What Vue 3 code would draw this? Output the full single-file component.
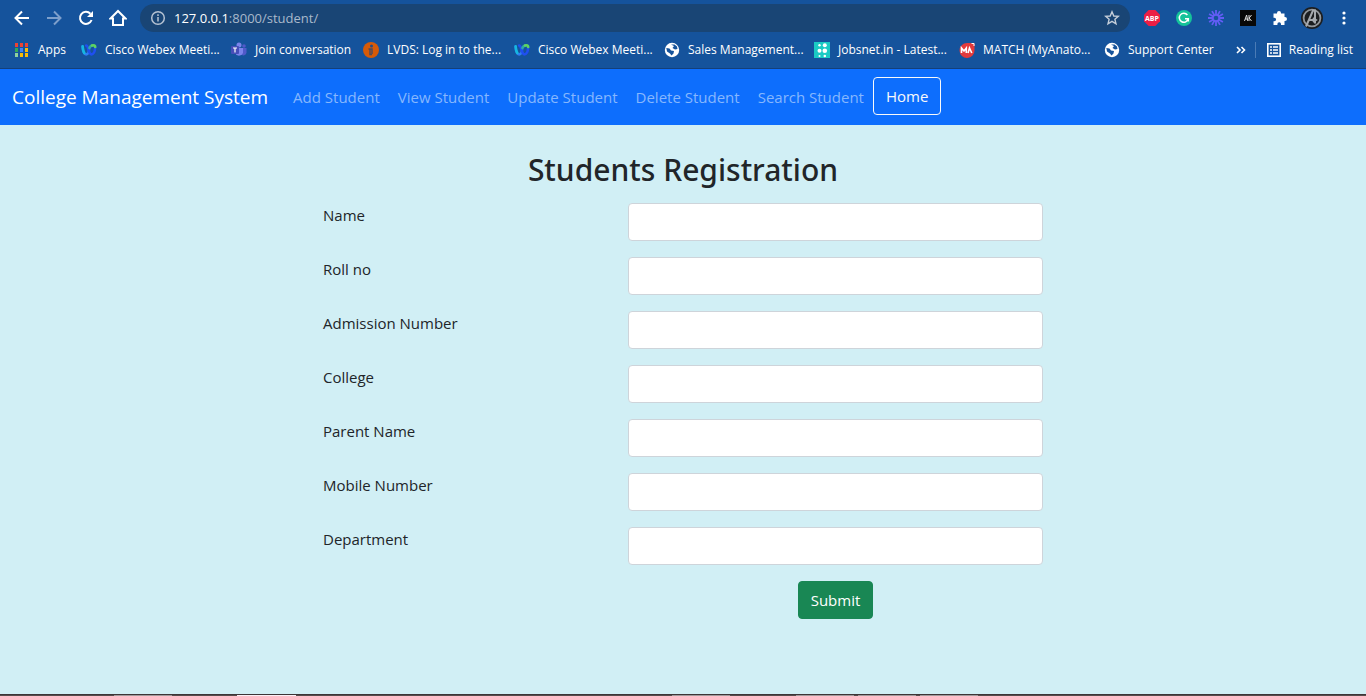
<script setup>
const bookmarks = [
  { icon: 'apps', label: 'Apps' },
  { icon: 'webex', label: 'Cisco Webex Meeti...' },
  { icon: 'teams', label: 'Join conversation' },
  { icon: 'lvds', label: 'LVDS: Log in to the...' },
  { icon: 'webex', label: 'Cisco Webex Meeti...' },
  { icon: 'globe', label: 'Sales Management...' },
  { icon: 'jobs', label: 'Jobsnet.in - Latest...' },
  { icon: 'match', label: 'MATCH (MyAnato...' },
  { icon: 'globe', label: 'Support Center' },
]
const appDots = ['#ea4335', '#ea4335', '#ea4335', '#34a853', '#4285f4', '#fbbc05', '#8fd19e', '#fbbc05', '#fbbc05']
const links = ['Add Student', 'View Student', 'Update Student', 'Delete Student', 'Search Student']
const fields = [
  { id: 'name', label: 'Name' },
  { id: 'roll', label: 'Roll no' },
  { id: 'admission', label: 'Admission Number' },
  { id: 'college', label: 'College' },
  { id: 'parent', label: 'Parent Name' },
  { id: 'mobile', label: 'Mobile Number' },
  { id: 'department', label: 'Department' },
]
</script>

<template>
  <div class="window">
    <header class="chrome">
      <div class="toolbar">
        <button class="tool" aria-label="Back">
          <svg width="16" height="16" viewBox="0 0 16 16" fill="none" stroke="#fff" stroke-width="2"><path d="M15 8H2M8 1.5L1.5 8L8 14.5" /></svg>
        </button>
        <button class="tool" aria-label="Forward">
          <svg width="16" height="16" viewBox="0 0 16 16" fill="none" stroke="#7d9fcb" stroke-width="2"><path d="M1 8H14M8 1.5L14.5 8L8 14.5" /></svg>
        </button>
        <button class="tool" aria-label="Reload">
          <svg width="16" height="16" viewBox="0 0 16 16" fill="none" stroke="#fff" stroke-width="2"><path d="M13.6 10A6 6 0 1 1 12.4 3.8" /><path d="M15 1V7H9Z" fill="#fff" stroke="none" /></svg>
        </button>
        <button class="tool" aria-label="Home page">
          <svg width="18" height="18" viewBox="0 0 18 18" fill="none" stroke="#fff" stroke-width="2"><path d="M1.5 9.5L9 2L16.5 9.5H14V16H4V9.5Z" /></svg>
        </button>
        <div class="address">
          <svg width="16" height="16" viewBox="0 0 16 16" fill="none" stroke="#b5c2d2" stroke-width="1.5"><circle cx="8" cy="8" r="6.3" /><path d="M8 7V11.5M8 4.3V6" /></svg>
          <span class="url"><b>127.0.0.1</b>:8000/student/</span>
          <button class="star" aria-label="Bookmark this page">
            <svg width="16" height="16" viewBox="0 0 16 16" fill="none" stroke="#c5ced9" stroke-width="1.4"><path d="M8 1.8L9.8 6L14.3 6.4L10.9 9.3L12 13.8L8 11.4L4 13.8L5.1 9.3L1.7 6.4L6.2 6Z" /></svg>
          </button>
        </div>
        <div class="extensions">
          <button class="tool" aria-label="Ad blocker">
            <svg width="16" height="16" viewBox="0 0 16 16"><path d="M4.7 0H11.3L16 4.7V11.3L11.3 16H4.7L0 11.3V4.7Z" fill="#ed1e45" /><text x="8" y="10.6" class="abp" text-anchor="middle">ABP</text></svg>
          </button>
          <button class="tool" aria-label="Grammar">
            <svg width="16" height="16" viewBox="0 0 16 16"><circle cx="8" cy="8" r="8" fill="#15c39a" /><path d="M11.4 5A4.5 4.5 0 1 0 12.2 8.8H9M12.3 8.4V11.5" fill="none" stroke="#fff" stroke-width="1.5" /></svg>
          </button>
          <button class="tool" aria-label="Recorder">
            <svg width="16" height="16" viewBox="0 0 16 16" fill="none" stroke="#625df5" stroke-width="1.8"><path d="M8 0V5M8 11V16M0 8H5M11 8H16M4 1.1L6.5 5.4M9.5 10.6L12 14.9M1.1 4L5.4 6.5M10.6 9.5L14.9 12M1.1 12L5.4 9.5M10.6 6.5L14.9 4M4 14.9L6.5 10.6M9.5 5.4L12 1.1" /><circle cx="8" cy="8" r="3.2" /></svg>
          </button>
          <button class="tool" aria-label="AK">
            <svg width="16" height="16" viewBox="0 0 16 16"><rect width="16" height="16" fill="#080808" /><path d="M4.5 11L6.6 5L7.8 11M5.2 9H7.5M9 5V11M11.5 5L9.2 8L11.5 11" fill="none" stroke="#ddd" stroke-width="1" /></svg>
          </button>
          <button class="tool" aria-label="Extensions">
            <svg width="16" height="16" viewBox="0 0 16 16" fill="#fff"><path d="M1.5 3.5H5V3A2 2 0 0 1 9 3V3.5H12.5V7H13A2 2 0 0 1 13 11H12.5V15H9V14A1.8 1.8 0 0 0 5.4 14V15H1.5V11.3H2.3A1.8 1.8 0 0 0 2.3 7.7H1.5Z" /></svg>
          </button>
          <button class="tool" aria-label="Profile">
            <svg width="22" height="22" viewBox="0 0 22 22"><circle cx="11" cy="11" r="11" fill="#1c1e20" /><circle cx="11" cy="11" r="8.4" fill="none" stroke="#92969a" stroke-width="1.8" /><path d="M5 19.5L12 3.5H14V16.5M8.5 13H15M12 11L15 13L12 15" fill="none" stroke="#a5a9ad" stroke-width="2" /></svg>
          </button>
          <button class="tool" aria-label="Menu">
            <svg width="16" height="16" viewBox="0 0 16 16" fill="#fff"><circle cx="8" cy="3" r="1.6" /><circle cx="8" cy="8" r="1.6" /><circle cx="8" cy="13" r="1.6" /></svg>
          </button>
        </div>
      </div>

      <div class="bookmarks">
        <nav class="bookmark-list" aria-label="Bookmarks">
          <a v-for="(b, i) in bookmarks" :key="i" href="#" class="bookmark">
            <svg v-if="b.icon === 'apps'" width="16" height="16" viewBox="0 0 16 16"><rect v-for="(c, n) in appDots" :key="n" :x="1 + (n % 3) * 5" :y="1 + Math.floor(n / 3) * 5" width="3" height="4" :fill="c" /></svg>
            <svg v-else-if="b.icon === 'webex'" width="16" height="16" viewBox="0 0 16 16" fill="none" stroke-linecap="round" stroke-width="2.6"><path d="M1.6 4.5C1.8 8.5 3 12.4 5.2 12.4C7.2 12.4 8 9.5 8 7.5" stroke="#2f7df2" /><path d="M1.6 4.3C1.8 7 2.4 9.5 3.3 11" stroke="#14b8e0" /><path d="M5.2 3.6C7.6 3.6 7.4 12.4 10.4 12.4C12.8 12.4 14 8.5 14.2 5" stroke="#1f4ff0" /><path d="M8.4 6C9 4.4 10 3.6 11.5 3.5" stroke="#2fa8a8" /><path d="M11 3.5C12.8 2.8 14.2 3.6 14.2 5" stroke="#5fd35f" /></svg>
            <svg v-else-if="b.icon === 'teams'" width="16" height="16" viewBox="0 0 16 16"><circle cx="8" cy="3" r="2.5" fill="#7b83eb" /><circle cx="13" cy="4" r="1.8" fill="#5059c9" /><path d="M10 6H15.5V10.5A3 3 0 0 1 10 12Z" fill="#5059c9" /><path d="M4 6H12V11A4.3 4.3 0 0 1 4 11Z" fill="#7b83eb" /><rect x="0" y="4" width="8" height="8" rx="1" fill="#464eb8" /><path d="M2 6H6M4 6V10.5" stroke="#fff" stroke-width="1.2" /></svg>
            <svg v-else-if="b.icon === 'lvds'" width="16" height="16" viewBox="0 0 16 16"><circle cx="8" cy="8" r="8" fill="#d65a08" /><circle cx="8.5" cy="4" r="1.5" fill="#234b83" /><path d="M5.5 7H9V12M7 7V12.5H9" fill="none" stroke="#504b5a" stroke-width="1.5" /></svg>
            <svg v-else-if="b.icon === 'globe'" width="16" height="16" viewBox="0 0 16 16"><circle cx="8" cy="8" r="7.2" fill="#fff" /><path d="M2.3 6L5.5 6.5L7 8.5L10 9L9.5 11.5L7.5 13.5L6 11.5L3 9.5ZM7 2.5L10 4L8.5 6L11 7.5L13.5 7L13 4.5L10.5 2.5Z" fill="#15539c" /></svg>
            <svg v-else-if="b.icon === 'jobs'" width="16" height="16" viewBox="0 0 16 16" fill="#fff"><rect width="16" height="16" fill="#1bcac4" /><circle cx="5.5" cy="3.3" r="1.2" /><circle cx="10.8" cy="3.3" r="2" /><circle cx="5.5" cy="8.7" r="2" /><circle cx="10.8" cy="8.7" r="2.3" /><circle cx="5.5" cy="14" r="1" /><circle cx="10.8" cy="14" r="1.3" /></svg>
            <svg v-else width="16" height="16" viewBox="0 0 16 16"><path d="M8 1H15.5V8A7.5 7.5 0 1 1 8 1Z" fill="#e23a3c" /><path d="M2.5 11V6L5 9L7.3 6V11M9 11L10.5 6L12.8 11" fill="none" stroke="#fff" stroke-width="1.6" /><path d="M12.5 1.5H15V4" fill="none" stroke="#fff" /></svg>
            <span>{{ b.label }}</span>
          </a>
        </nav>
        <button class="more" aria-label="More bookmarks">
          <svg width="10" height="8" viewBox="0 0 10 8" fill="none" stroke="#fff" stroke-width="1.6"><path d="M1 1L4 4L1 7M5.5 1L8.5 4L5.5 7" /></svg>
        </button>
        <button class="reading">
          <svg width="14" height="14" viewBox="0 0 14 14" fill="none" stroke="#fff" stroke-width="1.6"><rect x="0.8" y="0.8" width="12.4" height="12.4" /><path d="M3 4H5M6 4H11M3 7H5M6 7H11M3 10H5M6 10H11" /></svg>
          <span>Reading list</span>
        </button>
      </div>
    </header>

    <nav class="navbar">
      <a href="#" class="brand">College Management System</a>
      <a v-for="l in links" :key="l" href="#" class="nav-link">{{ l }}</a>
      <button class="home">Home</button>
    </nav>

    <main class="page">
      <h2>Students Registration</h2>
      <form class="form" @submit.prevent>
        <template v-for="f in fields" :key="f.id">
          <label :for="f.id">{{ f.label }}</label>
          <input :id="f.id" type="text" />
        </template>
        <button type="submit" class="submit">Submit</button>
      </form>
    </main>
    <div class="taskbar"></div>
  </div>
</template>

<style>
body {
  margin: 0;
}
</style>

<style scoped>
* {
  box-sizing: border-box;
}
.window {
  display: flex;
  flex-direction: column;
  min-height: 100vh;
  background: #d1eff5;
  color: #212529;
  font: 400 15px/24px "Segoe UI", "Open Sans", "Noto Sans", sans-serif;
}
button {
  font: inherit;
  color: inherit;
  padding: 0;
  border: 0;
  background: none;
}
a {
  text-decoration: none;
}
svg {
  flex: none;
  display: block;
}
.chrome {
  background: #15539c;
  color: #fff;
  border-bottom: 1px solid #15407a;
}
.toolbar {
  display: flex;
  align-items: center;
  height: 36px;
  padding: 0 6px;
}
.tool {
  display: flex;
  flex: none;
  align-items: center;
  justify-content: center;
  width: 32px;
  height: 28px;
}
.address {
  display: flex;
  flex: 1;
  align-items: center;
  height: 28px;
  margin: 0 6px;
  padding: 0 10px;
  border-radius: 14px;
  background: #194575;
}
.url {
  flex: 1;
  margin-left: 8px;
  font-size: 13px;
  color: #a9b9cb;
}
.url b {
  font-weight: 400;
  color: #fff;
}
.extensions {
  display: flex;
}
.abp {
  font: 700 7px "Open Sans", sans-serif;
  fill: #fff;
}
.bookmarks {
  display: flex;
  align-items: center;
  height: 32px;
  padding: 0 13px 4px 14px;
  font-size: 12px;
  line-height: 16px;
}
.bookmark-list {
  display: grid;
  flex: 1;
  grid-template-columns: 67px 150px 132px 151px 150px 150px 145px 145px auto;
}
.bookmark {
  display: flex;
  align-items: center;
  gap: 8px;
  color: #fff;
  white-space: nowrap;
}
.more {
  padding: 0 9px;
}
.reading {
  display: flex;
  align-items: center;
  gap: 8px;
  padding-left: 11px;
  border-left: 1px solid #4b7bb5;
  white-space: nowrap;
}
.navbar {
  display: flex;
  align-items: flex-start;
  min-height: 56px;
  padding: 8px 12px;
  background: #0d6efd;
  white-space: nowrap;
}
.brand {
  margin-right: 16px;
  font-size: 19px;
  line-height: 40px;
  color: #fff;
}
.nav-link {
  padding: 0 9px;
  line-height: 40px;
  color: #86b7fe;
}
.home {
  height: 38px;
  padding: 0 12px;
  border: 1px solid #f8f9fa;
  border-radius: 4px;
  color: #f8f9fa;
}
.page {
  flex: 1;
  padding: 26px 24px;
}
h2 {
  margin: 0 0 14px;
  font-family: "Segoe UI", "Noto Sans", sans-serif;
  font-size: 30px;
  line-height: 38px;
  font-weight: 500;
  text-align: center;
}
.form {
  display: grid;
  grid-template-columns: 305fr 415fr;
  gap: 16px 0;
  max-width: 720px;
  margin: 0 auto;
}
.form input {
  width: 100%;
  height: 38px;
  padding: 6px 12px;
  border: 1px solid #ced4da;
  border-radius: 4px;
  background: #fff;
  font: inherit;
}
.submit {
  grid-column: 2;
  justify-self: center;
  height: 38px;
  padding: 0 12px;
  border: 1px solid #198754;
  border-radius: 4px;
  background: #198754;
  color: #fff;
}
.taskbar {
  height: 2px;
  border-top: 1px solid #3d3537;
  background: linear-gradient(to right, #574c4c 114px, #a39a9c 114px 172px, #574c4c 172px 237px, #fbeef5 237px 296px, #574c4c 296px 672px, #a39a9c 672px 730px, #574c4c 730px 796px, #a39a9c 796px 854px, #574c4c 854px 858px, #a39a9c 858px 916px, #574c4c 916px 920px, #a39a9c 920px 978px, #574c4c 978px);
}
</style>
